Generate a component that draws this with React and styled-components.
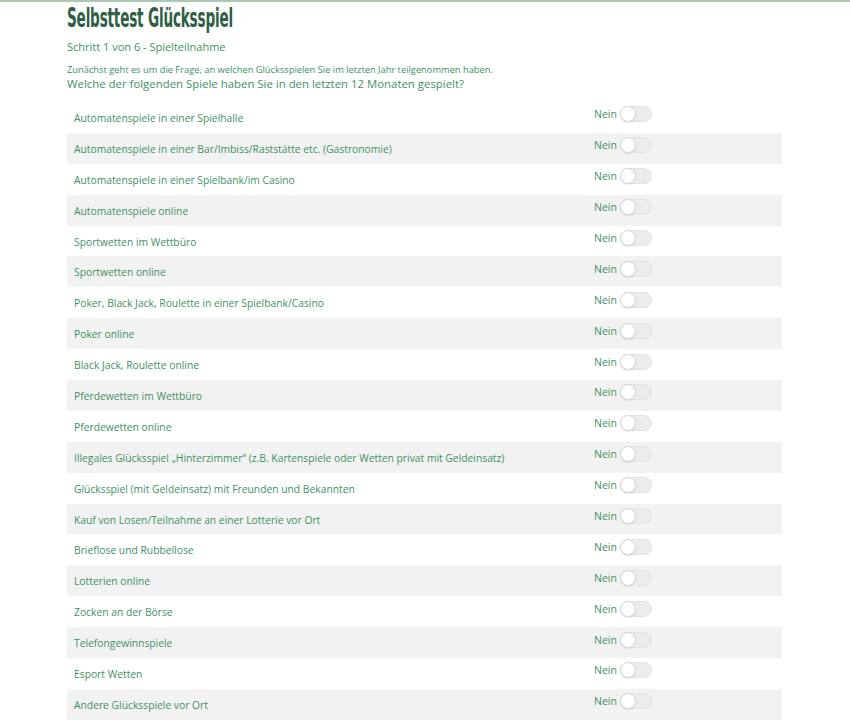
import React from 'react';
import styled, { createGlobalStyle } from 'styled-components';

const GlobalStyle = createGlobalStyle`
  html, body {
    margin: 0;
    padding: 0;
    background: #fff;
  }
  body {
    font-family: "Open Sans", "Liberation Sans", sans-serif;
    color: #41915f;
  }
`;

const Page = styled.div`
  border-top: 2px solid #a9c9b3;
  height: 722px;
  overflow: hidden;
`;

const Container = styled.div`
  width: 715px;
  margin-left: 67px;
`;

// condensed headline: squeeze a bold sans horizontally
const Title = styled.h1`
  margin: 2px 0 0;
  font-family: "DejaVu Sans", sans-serif;
  font-stretch: condensed;
  font-weight: 700;
  font-size: 26px;
  line-height: 28px;
  color: #2e5e43;
  letter-spacing: -0.3px;
  transform: scaleX(0.58);
  transform-origin: left center;
  white-space: nowrap;
`;

const Step = styled.div`
  margin-top: 7px;
  font-size: 11px;
  line-height: 16px;
`;

const Intro = styled.p`
  margin: 8px 0 0;
  font-size: 9.3px;
  line-height: 13px;
`;

const Question = styled.p`
  margin: 0;
  font-size: 11.4px;
  line-height: 16px;
`;

const List = styled.div`
  margin-top: 10px;
`;

const Row = styled.div`
  display: flex;
  align-items: center;
  height: 30.9px;
  padding-left: 7px;
  background: ${p => (p.$shaded ? '#f2f2f2' : 'transparent')};
`;

const Label = styled.span`
  flex: 0 0 520px;
  font-size: 10.3px;
  padding-top: 1px;
`;

const Answer = styled.div`
  display: flex;
  align-items: center;
  gap: 3px;
  margin-top: -6px;
  font-size: 10.5px;
`;

const Track = styled.span`
  position: relative;
  display: inline-block;
  width: 30px;
  height: 14px;
  border: 1px solid #e2e2e2;
  border-radius: 8px;
  background: #ececec;
`;

const Knob = styled.span`
  position: absolute;
  left: -1px;
  top: -1px;
  width: 14px;
  height: 14px;
  border: 1px solid #d6d6d6;
  border-radius: 50%;
  background: #fff;
  box-shadow: 0 1px 1px rgba(0, 0, 0, 0.08);
`;

const games = [
  'Automatenspiele in einer Spielhalle',
  'Automatenspiele in einer Bar/Imbiss/Raststätte etc. (Gastronomie)',
  'Automatenspiele in einer Spielbank/im Casino',
  'Automatenspiele online',
  'Sportwetten im Wettbüro',
  'Sportwetten online',
  'Poker, Black Jack, Roulette in einer Spielbank/Casino',
  'Poker online',
  'Black Jack, Roulette online',
  'Pferdewetten im Wettbüro',
  'Pferdewetten online',
  'Illegales Glücksspiel „Hinterzimmer“ (z.B. Kartenspiele oder Wetten privat mit Geldeinsatz)',
  'Glücksspiel (mit Geldeinsatz) mit Freunden und Bekannten',
  'Kauf von Losen/Teilnahme an einer Lotterie vor Ort',
  'Brieflose und Rubbellose',
  'Lotterien online',
  'Zocken an der Börse',
  'Telefongewinnspiele',
  'Esport Wetten',
  'Andere Glücksspiele vor Ort',
];

function Toggle() {
  return (
    <Track>
      <Knob />
    </Track>
  );
}

export default function App() {
  return (
    <>
      <GlobalStyle />
      <Page>
        <Container>
          <Title>Selbsttest Glücksspiel</Title>
          <Step>Schritt 1 von 6 - Spielteilnahme</Step>
          <Intro>Zunächst geht es um die Frage, an welchen Glücksspielen Sie im letzten Jahr teilgenommen haben.</Intro>
          <Question>Welche der folgenden Spiele haben Sie in den letzten 12 Monaten gespielt?</Question>
          <List>
            {games.map((g, i) => (
              <Row key={g} $shaded={i % 2 === 1}>
                <Label>{g}</Label>
                <Answer>
                  Nein
                  <Toggle />
                </Answer>
              </Row>
            ))}
          </List>
        </Container>
      </Page>
    </>
  );
}
